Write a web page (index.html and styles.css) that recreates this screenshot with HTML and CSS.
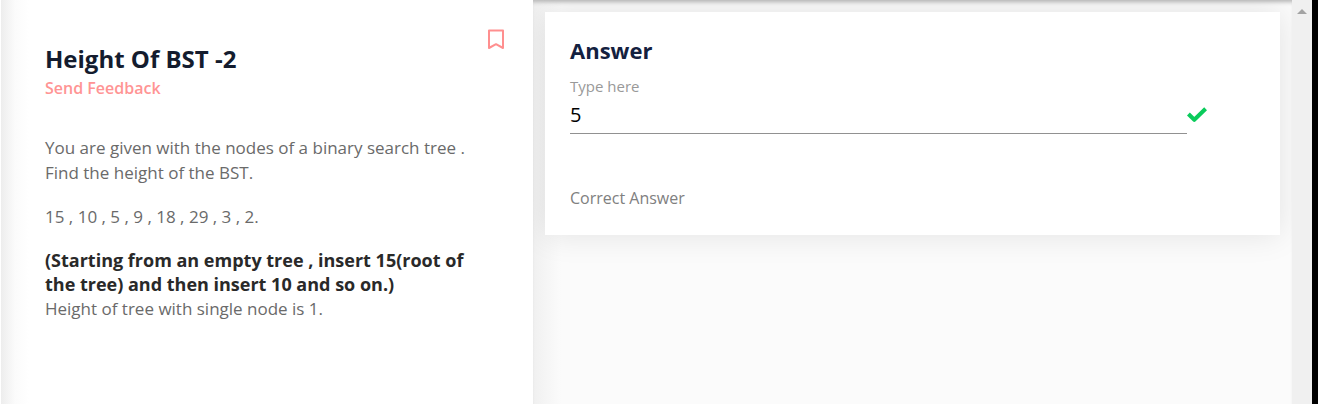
FILE: index.html
```html
<!DOCTYPE html>
<html lang="en">
<head>
<meta charset="utf-8">
<title>Height Of BST -2</title>
<link rel="stylesheet" href="styles.css">
</head>
<body>
<div class="page">
  <main class="workspace">
    <section class="problem">
      <header class="problem-header">
        <div class="heading">
          <h1 class="title">Height Of BST -2</h1>
          <a class="feedback" href="#feedback">Send Feedback</a>
        </div>
        <button class="bookmark" type="button" aria-label="Bookmark">
          <svg width="16" height="20" viewBox="0 0 16 20" fill="none" stroke="currentColor" stroke-width="2" stroke-linejoin="round"><path d="M1 1.5H15V19L8 15.2L1 19Z"/></svg>
        </button>
      </header>
      <div class="statement">
        <p>You are given with the nodes of a binary search tree .<br>Find the height of the BST.</p>
        <p>15 , 10 , 5 , 9 , 18 , 29 , 3 , 2.</p>
        <h2 class="note">(Starting from an empty tree , insert 15(root of<br>the tree) and then insert 10 and so on.)</h2>
        <p>Height of tree with single node is 1.</p>
      </div>
    </section>
    <section class="answer-area">
      <div class="card">
        <h2 class="card-title">Answer</h2>
        <label class="label" for="answer">Type here</label>
        <div class="field">
          <input class="input" id="answer" type="text" value="5">
          <svg class="check" width="20" height="16" viewBox="0 0 20 16" fill="none" stroke="currentColor" stroke-width="4" stroke-linejoin="round"><path d="M1.4 7L7.3 12.8L18.6 1.8"/></svg>
        </div>
        <p class="result">Correct Answer</p>
      </div>
    </section>
  </main>
  <div class="scrollbar"><span class="scroll-up"></span></div>
</div>
</body>
</html>
```

FILE: styles.css
```css
* { box-sizing: border-box; }

body {
  margin: 0;
  background: #fff;
  font-family: "Open Sans", "Noto Sans", sans-serif;
  color: #6a6a6a;
}

h1, h2, p { margin: 0; }

.page {
  display: flex;
  min-height: 100vh;
  border-right: 6px solid #000;
}

.workspace {
  flex: 1;
  display: grid;
  grid-template-columns: 533fr 759fr;
}

.problem {
  padding: 29px 29px 24px 44px;
  border-left: 1px solid #fff;
  background: linear-gradient(to right, #ededed, #fbfbfb 14px, #fff 28px);
}

.problem-header {
  display: flex;
  justify-content: space-between;
  align-items: flex-start;
}

.heading { padding-top: 14px; }

.title {
  font-size: 24px;
  line-height: 32px;
  font-weight: 700;
  color: #141c2e;
}

.feedback {
  display: block;
  font-size: 16px;
  line-height: 26px;
  font-weight: 600;
  color: #ff9494;
  text-decoration: none;
}

.bookmark {
  display: flex;
  padding: 0;
  border: 0;
  background: none;
  color: #ff8f8f;
}

.statement {
  padding-top: 34px;
  font-size: 17px;
  line-height: 25px;
}

.statement p + p, .note { margin-top: 19px; }

.note {
  font-size: 18px;
  line-height: 24px;
  font-weight: 700;
  color: #292929;
}

.answer-area {
  padding: 12px;
  overflow: hidden;
  background: linear-gradient(to right, #f0f0f0, #fbfbfb 28px);
  box-shadow: inset 0 5px 4px -3px #b4b4b4;
}

.card {
  padding: 23px 25px 24px;
  background: #fff;
  box-shadow: 0 0 30px rgba(0, 0, 0, 0.1);
}

.card-title {
  font-size: 22px;
  line-height: 30px;
  font-weight: 700;
  color: #14213f;
}

.label {
  display: block;
  padding-top: 8px;
  font-size: 15px;
  line-height: 26px;
  color: #999;
}

.field {
  display: flex;
  align-items: flex-start;
}

.input {
  width: 90%;
  height: 35px;
  padding: 0 0 3px;
  border: 0;
  border-bottom: 1px solid #919191;
  outline: 0;
  background: none;
  font-family: inherit;
  font-size: 20px;
  color: #000;
}

.check {
  margin-top: 8px;
  color: #0acb5b;
}

.result {
  padding-top: 52px;
  font-size: 16px;
  line-height: 25px;
  color: #808080;
}

.scrollbar {
  display: flex;
  justify-content: center;
  width: 20px;
  padding-top: 9px;
  background: #f0f0f0;
}

.scroll-up {
  width: 10px;
  height: 5px;
  background: #a3a3a3;
  clip-path: polygon(50% 0, 100% 100%, 0 100%);
}
```
